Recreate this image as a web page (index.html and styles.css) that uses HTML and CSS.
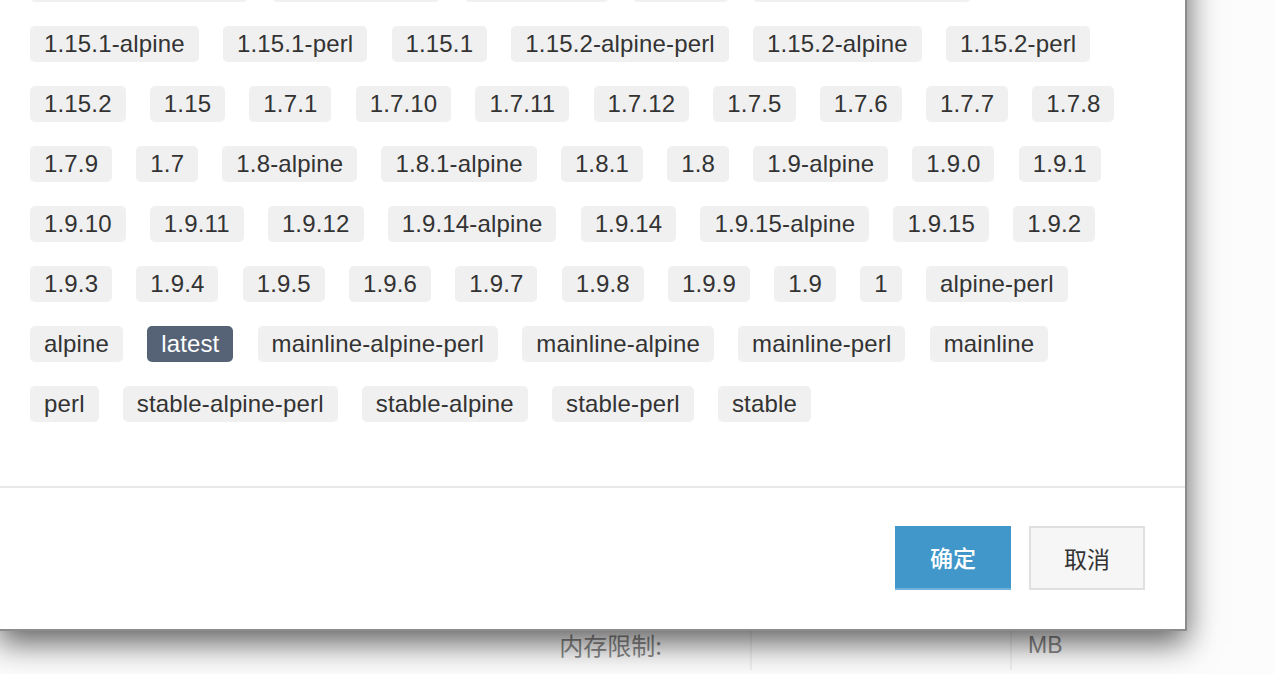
FILE: index.html
```html
<!DOCTYPE html>
<html lang="zh-CN">
<head>
<meta charset="utf-8">
<title>选择镜像版本</title>
<link rel="stylesheet" href="styles.css">
</head>
<body>
<div class="page">
  <div class="form-row">
    <label class="form-label">内存限制:</label>
    <div class="form-input"></div>
    <div class="form-addon">MB</div>
  </div>
</div>

<div class="modal">
  <div class="modal-body">
    <div class="tag-row">
      <span class="tag">1.15.0-alpine-perl</span>
      <span class="tag">1.15.0-alpine</span>
      <span class="tag">1.15.0-perl</span>
      <span class="tag">1.15.0</span>
      <span class="tag">1.15.1-alpine-perl</span>
    </div>
    <div class="tag-row">
      <span class="tag">1.15.1-alpine</span>
      <span class="tag">1.15.1-perl</span>
      <span class="tag">1.15.1</span>
      <span class="tag">1.15.2-alpine-perl</span>
      <span class="tag">1.15.2-alpine</span>
      <span class="tag">1.15.2-perl</span>
    </div>
    <div class="tag-row">
      <span class="tag">1.15.2</span>
      <span class="tag">1.15</span>
      <span class="tag">1.7.1</span>
      <span class="tag">1.7.10</span>
      <span class="tag">1.7.11</span>
      <span class="tag">1.7.12</span>
      <span class="tag">1.7.5</span>
      <span class="tag">1.7.6</span>
      <span class="tag">1.7.7</span>
      <span class="tag">1.7.8</span>
    </div>
    <div class="tag-row">
      <span class="tag">1.7.9</span>
      <span class="tag">1.7</span>
      <span class="tag">1.8-alpine</span>
      <span class="tag">1.8.1-alpine</span>
      <span class="tag">1.8.1</span>
      <span class="tag">1.8</span>
      <span class="tag">1.9-alpine</span>
      <span class="tag">1.9.0</span>
      <span class="tag">1.9.1</span>
    </div>
    <div class="tag-row">
      <span class="tag">1.9.10</span>
      <span class="tag">1.9.11</span>
      <span class="tag">1.9.12</span>
      <span class="tag">1.9.14-alpine</span>
      <span class="tag">1.9.14</span>
      <span class="tag">1.9.15-alpine</span>
      <span class="tag">1.9.15</span>
      <span class="tag">1.9.2</span>
    </div>
    <div class="tag-row">
      <span class="tag">1.9.3</span>
      <span class="tag">1.9.4</span>
      <span class="tag">1.9.5</span>
      <span class="tag">1.9.6</span>
      <span class="tag">1.9.7</span>
      <span class="tag">1.9.8</span>
      <span class="tag">1.9.9</span>
      <span class="tag">1.9</span>
      <span class="tag">1</span>
      <span class="tag">alpine-perl</span>
    </div>
    <div class="tag-row">
      <span class="tag">alpine</span>
      <span class="tag tag-active">latest</span>
      <span class="tag">mainline-alpine-perl</span>
      <span class="tag">mainline-alpine</span>
      <span class="tag">mainline-perl</span>
      <span class="tag">mainline</span>
    </div>
    <div class="tag-row">
      <span class="tag">perl</span>
      <span class="tag">stable-alpine-perl</span>
      <span class="tag">stable-alpine</span>
      <span class="tag">stable-perl</span>
      <span class="tag">stable</span>
    </div>
  </div>
  <div class="modal-footer">
    <button class="btn btn-primary">确定</button>
    <button class="btn btn-default">取消</button>
  </div>
</div>
</body>
</html>
```

FILE: styles.css
```css
html, body {
  margin: 0;
  padding: 0;
}

body {
  width: 1274px;
  height: 674px;
  overflow: hidden;
  background: #fcfcfc;
  font-family: "Liberation Sans", "Noto Sans CJK SC", Arial, sans-serif;
  position: relative;
}

.page {
  padding-top: 620px;
}

.form-row {
  display: flex;
  height: 50px;
  line-height: 50px;
  font-size: 24px;
  color: #8a8a8a;
}

.form-label {
  flex: 0 0 662px;
  text-align: right;
  font-family: "Noto Sans CJK SC", sans-serif;
  font-size: 24px;
}

.form-input {
  margin-left: 88px;
  width: 258px;
  border-left: 2px solid #f0f0f0;
  border-right: 2px solid #f0f0f0;
  background: #fcfcfc;
}

.form-addon {
  padding-left: 16px;
  width: 70px;
  font-size: 23px;
  color: #8a8a8a;
}

.modal {
  position: absolute;
  left: -2px;
  top: -60px;
  width: 1189px;
  box-sizing: border-box;
  background: #fff;
  border: 2px solid rgba(0, 0, 0, 0.45);
  box-shadow: 0 12px 30px rgba(0, 0, 0, 0.62);
}

.modal-body {
  padding: 24px 40px 64px 30px;
  display: flex;
  flex-direction: column;
  gap: 24px;
}

.tag-row {
  display: flex;
  column-gap: 24.2px;
}

.tag {
  display: block;
  height: 36px;
  line-height: 36px;
  padding: 0 14px;
  background: #f0f0f0;
  color: #333;
  font-size: 24px;
  letter-spacing: 0.15px;
  border-radius: 5px;
  white-space: nowrap;
}

.tag-active {
  background: #566276;
  color: #fff;
}

.modal-footer {
  border-top: 2px solid #e8e8e8;
  padding: 38px 40px 39px;
  display: flex;
  justify-content: flex-end;
  gap: 18px;
}

.btn {
  width: 116px;
  height: 64px;
  box-sizing: border-box;
  font-family: "Noto Sans CJK SC", sans-serif;
  font-size: 23px;
  border: 0;
  padding: 0;
  margin: 0;
  cursor: pointer;
}

.btn-primary {
  background: #4197c9;
  color: #fff;
  border-bottom: 2px solid #70b2da;
  font-weight: 500;
}

.btn-default {
  background: #f6f6f6;
  color: #333;
  border: 2px solid #e0e0e0;
}
```
